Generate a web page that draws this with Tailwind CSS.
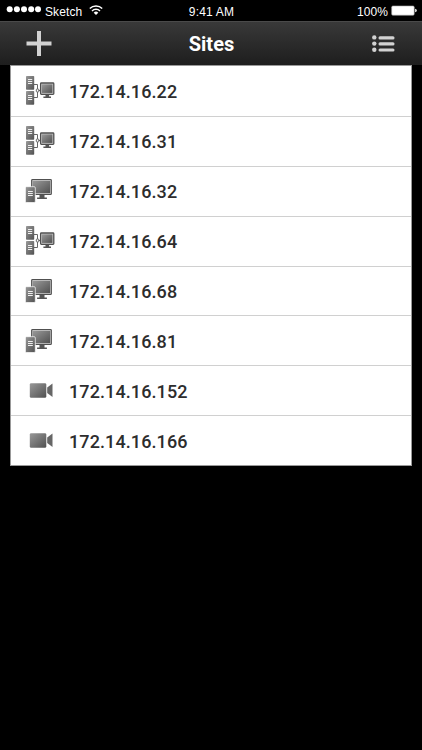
<!DOCTYPE html>
<html lang="en">
 <head>
  <meta charset="utf-8"/>
  <meta content="width=device-width, initial-scale=1.0" name="viewport"/>
  <title>Sites</title>
  <script src="https://cdn.jsdelivr.net/npm/@tailwindcss/browser@4"></script>
 </head>
 <body class="bg-black min-h-screen overflow-hidden font-['Roboto',sans-serif]">
  <!-- Shared icons -->
  <svg class="absolute size-0" aria-hidden="true">
   <defs>
    <linearGradient id="metal" x1="0" y1="0" x2="1" y2="1">
     <stop offset="0" stop-color="#999"/>
     <stop offset="1" stop-color="#505050"/>
    </linearGradient>
    <symbol id="network" viewBox="0 0 32 32">
     <rect x="2" y="1" width="8.2" height="13.8" rx=".7" fill="url(#metal)"/>
     <rect x="2" y="16" width="8.2" height="13.8" rx=".7" fill="url(#metal)"/>
     <path d="M4 4.5h4.2M4 6.5h4.2M4 8.5h4.2M4 20.5h4.2M4 22.5h4.2M4 24.5h4.2" stroke="#eee" stroke-width="1.2"/>
     <path d="M10 9.5h3.5v13H10M13.5 15.5h3" fill="none" stroke="#666" stroke-width="1"/>
     <rect x="12.3" y="14" width="2.5" height="3" rx=".8" fill="#fff" stroke="#666" stroke-width="1"/>
     <rect x="16.6" y="8" width="13.2" height="11.3" rx=".8" fill="#c8c8c8" stroke="#505050" stroke-width="1.3"/>
     <rect x="18" y="9.4" width="10.4" height="8.5" fill="url(#metal)"/>
     <path d="M21.5 19.5h3.6v2h1.9v1.6h-7.6v-1.6h2.1z" fill="#555"/>
    </symbol>
    <symbol id="host" viewBox="0 0 32 32">
     <rect x="7.7" y="4.5" width="19.6" height="15" rx=".8" fill="#c8c8c8" stroke="#505050" stroke-width="1.2"/>
     <rect x="9" y="5.8" width="17" height="12.4" fill="url(#metal)"/>
     <path d="M15.5 20h5v2.4h2.4V24h-9.8v-1.6h2.4z" fill="#555"/>
     <rect x="1.4" y="11.7" width="9.9" height="15.8" rx="1.2" fill="url(#metal)" stroke="#fff" stroke-width=".7"/>
     <path d="M4 16.500h4.800M4 18.500h4.800M4 20.500h4.800" stroke="#eee" stroke-width="1.200"/>
    </symbol>
    <symbol id="camera" viewBox="0 0 32 32">
     <rect x="5.800" y="8.200" width="16.500" height="14.600" rx="1.400" fill="url(#metal)"/>
     <path d="M23.200 12.500l5.300-4v13.600l-5.300-4z" fill="#666"/>
    </symbol>
   </defs>
  </svg>

  <!-- Status bar -->
  <div class="h-[21px] grid grid-cols-3 items-start pt-1 pl-[6px] pr-[5px] text-white text-[12px] leading-4 font-['Liberation_Sans',sans-serif]">
   <div class="flex items-start">
    <svg class="w-[35px] h-3 mr-1" viewBox="0 0 35 12" fill="#fff">
     <circle cx="3.7" cy="5.3" r="3"/>
     <circle cx="10.9" cy="5.3" r="3"/>
     <circle cx="18" cy="5.3" r="3"/>
     <circle cx="25.2" cy="5.3" r="3"/>
     <circle cx="32" cy="5.3" r="3"/>
    </svg>
    <span class="tracking-[0.1px]">Sketch</span>
    <svg class="w-[14px] h-3 ml-[7px]" viewBox="0 0 14 12" fill="none" stroke="#fff" stroke-width="1.5">
     <path d="M.8 4.500a8.800 8.800 0 0 1 12.400 0M3 7a5.700 5.700 0 0 1 8 0"/>
     <path d="M7 11L4.700 8.700a3.300 3.300 0 0 1 4.600 0z" fill="#fff" stroke="none"/>
    </svg>
   </div>
   <span class="text-center tracking-[0.2px]">9:41 AM</span>
   <div class="flex justify-end">
    <span class="tracking-[0.1px]">100%</span>
    <svg class="w-[26px] h-3 ml-[3px]" viewBox="0 0 26 12" fill="#fff">
     <rect x=".7" y="2" width="22.5" height="9.2" rx="1.2" stroke="#aaa" stroke-width=".6"/>
     <path d="M24.200 4.800q1.500 0 1.500 1.700t-1.500 1.700z"/>
    </svg>
   </div>
  </div>

  <!-- Nav bar -->
  <header class="h-11 flex items-center justify-between pl-[26px] pr-[27px] border-t border-[#4a4a4a] bg-linear-to-b from-[#393939] to-[#1e1e1e]">
   <svg class="size-[26px]" viewBox="0 0 26 26">
    <path d="M.5 12.500h25M13 0v25" stroke="#d2d2d2" stroke-width="4"/>
   </svg>
   <h1 class="text-white text-[20px] font-bold leading-6 pt-px">Sites</h1>
   <svg class="w-6 h-[18px]" viewBox="0 0 24 18" fill="#d2d2d2">
    <circle cx="3.3" cy="2.4" r="2.2"/>
    <circle cx="3.3" cy="8.6" r="2.2"/>
    <circle cx="3.3" cy="14.800" r="2.2"/>
    <rect x="7.5" y="1.3" width="16" height="3.2" rx="1.5"/>
    <rect x="7.5" y="7.3" width="16" height="3.2" rx="1.5"/>
    <rect x="7.5" y="13.4" width="16" height="3.2" rx="1.5"/>
   </svg>
  </header>

  <!-- Site list -->
  <ul class="mx-[10px] h-[401px] pt-px grid grid-rows-[repeat(8,49.9px)] bg-white border border-[#999] divide-y divide-[#d0d0d0] text-[18px] font-medium tracking-[0.1px] text-[#2d2d2d]">
   <li class="flex items-center pl-[13px] gap-[13px]"><svg class="size-8"><use href="#network"/></svg><span class="pt-px">172.14.16.22</span></li>
   <li class="flex items-center pl-[13px] gap-[13px]"><svg class="size-8"><use href="#network"/></svg><span class="pt-px">172.14.16.31</span></li>
   <li class="flex items-center pl-[13px] gap-[13px]"><svg class="size-8"><use href="#host"/></svg><span class="pt-px">172.14.16.32</span></li>
   <li class="flex items-center pl-[13px] gap-[13px]"><svg class="size-8"><use href="#network"/></svg><span class="pt-px">172.14.16.64</span></li>
   <li class="flex items-center pl-[13px] gap-[13px]"><svg class="size-8"><use href="#host"/></svg><span class="pt-px">172.14.16.68</span></li>
   <li class="flex items-center pl-[13px] gap-[13px]"><svg class="size-8"><use href="#host"/></svg><span class="pt-px">172.14.16.81</span></li>
   <li class="flex items-center pl-[13px] gap-[13px]"><svg class="size-8"><use href="#camera"/></svg><span class="pt-px">172.14.16.152</span></li>
   <li class="flex items-center pl-[13px] gap-[13px]"><svg class="size-8"><use href="#camera"/></svg><span class="pt-px">172.14.16.166</span></li>
  </ul>
 </body>
</html>
